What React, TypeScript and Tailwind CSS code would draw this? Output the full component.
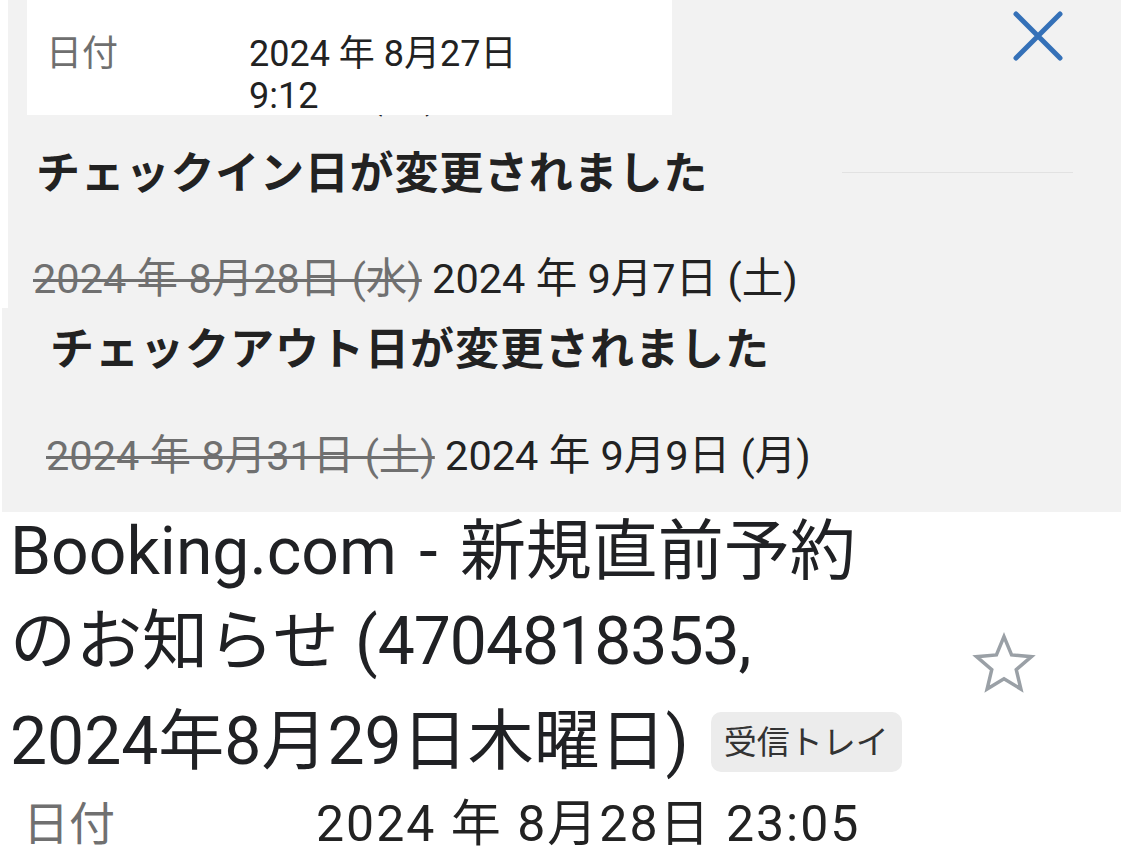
const font = "font-['Roboto','Noto_Sans_CJK_JP',sans-serif]"

function CloseIcon() {
  return (
    <svg width="60" height="60" viewBox="0 0 60 60" className="shrink-0">
      <path d="M8 8L52 52M52 8L8 52" stroke="#3571b8" strokeWidth="5" strokeLinecap="round" fill="none" />
    </svg>
  )
}

function StarIcon() {
  return (
    <svg width="70" height="70" viewBox="0 0 24 24" className="shrink-0">
      <polygon
        points="12,2.6 14.6,8.9 21.4,9.5 16.2,13.9 17.8,20.6 12,17.1 6.2,20.6 7.8,13.9 2.6,9.5 9.4,8.9"
        fill="none"
        stroke="#9aa0a6"
        strokeWidth="1.2"
        strokeLinejoin="miter"
      />
    </svg>
  )
}

export default function App() {
  return (
    <div className={`w-[1121px] h-[850px] overflow-hidden bg-white text-[#222] ${font}`}>
      {/* Check-in change panel */}
      <div className="relative ml-[8px] h-[308px] bg-[#f2f2f2] flex">
        <div className="flex-1 min-w-0">
          <div className="mt-[68px] pl-[38px] text-[42px] leading-[50px] whitespace-nowrap">
            2024 年 8月27日 (火)
          </div>
          <div className="mt-[31px] pl-[28px] text-[44px] leading-[50px] font-bold tracking-[0.8px] whitespace-nowrap">
            チェックイン日が変更されました
          </div>
          <div className="mt-[55px] pl-[25px] text-[41.5px] leading-[50px] whitespace-nowrap">
            <span className="text-[#707070] line-through decoration-[#707070] decoration-[3px]">2024 年 8月28日 (水)</span>{' '}
            <span>2024 年 9月7日 (土)</span>
          </div>
        </div>
        <div className="w-[231px] mr-[48px] flex flex-col">
          <div className="self-end mr-[5px] mt-[6px]">
            <CloseIcon />
          </div>
          <div className="mt-[106px] h-px bg-[#e2e2e2]" />
        </div>

        {/* date header lying over the panel */}
        <div className="absolute left-[19px] top-0 w-[645px] h-[115px] bg-white flex pt-[33px] text-[36px] leading-[42px]">
          <div className="w-[222px] pl-[19px] text-[#6f6f6f]">日付</div>
          <div>
            <div>2024 年 8月27日</div>
            <div>9:12</div>
          </div>
        </div>
      </div>

      {/* Check-out change panel */}
      <div className="ml-[2px] h-[204px] bg-[#f2f2f2] pt-[17px]">
        <div className="pl-[48px] text-[44px] leading-[50px] font-bold tracking-[1px] whitespace-nowrap">
          チェックアウト日が変更されました
        </div>
        <div className="mt-[56px] pl-[44px] text-[41.5px] leading-[50px] whitespace-nowrap">
          <span className="text-[#707070] line-through decoration-[#707070] decoration-[3px]">2024 年 8月31日 (土)</span>{' '}
          <span>2024 年 9月9日 (月)</span>
        </div>
      </div>

      {/* Message header */}
      <div className="flex text-[#202124]">
        <div className="pl-[10px] text-[66px] leading-[80px] whitespace-nowrap">
          <div>
            Booking.com<span className="mx-[6px]"> - </span>新規直前予約
          </div>
          <div className="mt-[10px]">
            のお知らせ (<span className="tracking-[-1px]">4704818353</span>,
          </div>
          <div className="mt-[20px] flex items-center gap-[22px]">
            <span>2024年8月29日木曜日)</span>
            <span className="px-[13px] h-[60px] flex items-center rounded-[10px] bg-[#ececec] text-[33px] leading-none text-[#333]">
              受信トレイ
            </span>
          </div>
        </div>
        <div className="ml-auto mr-[82px] mt-[117px]">
          <StarIcon />
        </div>
      </div>
      <div className="mt-[17px] flex text-[50px] leading-[50px] whitespace-nowrap">
        <div className="w-[316px] pl-[23px] text-[46px] text-[#707070]">日付</div>
        <div className="tracking-[2px]">2024 年 8月28日 23:05</div>
      </div>
    </div>
  )
}
